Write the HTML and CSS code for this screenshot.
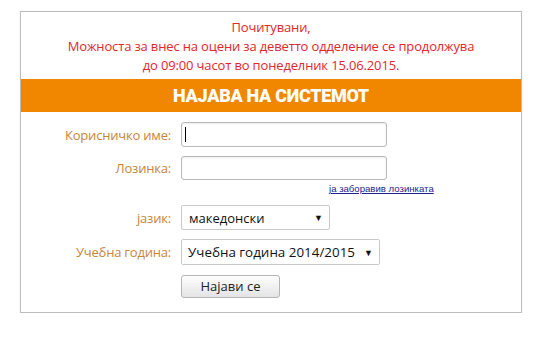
FILE: index.html
```html
<!DOCTYPE html>
<html lang="mk">
<head>
<meta charset="utf-8">
<title>Најава на системот</title>
<link rel="stylesheet" href="styles.css">
</head>
<body>
<div class="box">
  <div class="notice">
    <div>Почитувани,</div>
    <div>Можноста за внес на оцени за деветто одделение се продолжува</div>
    <div>до 09:00 часот во понеделник 15.06.2015.</div>
  </div>
  <div class="title">НАЈАВА НА СИСТЕМОТ</div>
  <form class="form">
    <div class="row r1">
      <label class="lbl">Корисничко име:</label>
      <div class="field input"><span class="caret"></span></div>
    </div>
    <div class="row r2">
      <label class="lbl">Лозинка:</label>
      <div class="field input"></div>
    </div>
    <div class="row linkrow">
      <span class="lbl"></span>
      <a class="forgot" href="#">ја заборавив лозинката</a>
    </div>
    <div class="row r3">
      <label class="lbl">јазик:</label>
      <div class="field select lang"><span>македонски</span><span class="arrow">▼</span></div>
    </div>
    <div class="row r4">
      <label class="lbl">Учебна година:</label>
      <div class="field select year"><span>Учебна година 2014/2015</span><span class="arrow">▼</span></div>
    </div>
    <div class="row r5">
      <span class="lbl"></span>
      <div class="btn">Најави се</div>
    </div>
  </form>
</div>
</body>
</html>
```
FILE: styles.css
```css
html, body {
  margin: 0;
  padding: 0;
  background: #fff;
}
body {
  font-family: "Open Sans", "Noto Sans", sans-serif;
  font-size: 13px;
}
.box {
  margin: 11px 0 0 20px;
  width: 500px;
  height: 300px;
  border: 1px solid #bdbdbd;
  box-shadow: 0 0 3px rgba(0,0,0,0.06);
}
.notice {
  color: #e2262c;
  text-align: center;
  line-height: 19px;
  padding: 6px 0 4px;
  height: 57px;
  letter-spacing: -0.15px;
}
.title {
  background: #f18700;
  color: #fff;
  height: 33px;
  line-height: 33px;
  text-align: center;
  font-family: Roboto, "Liberation Sans", sans-serif;
  font-weight: 900;
  font-size: 18px;
  letter-spacing: -0.3px;
}
.form {
  display: flex;
  flex-direction: column;
  padding-top: 10px;
}
.row {
  display: flex;
  align-items: center;
}
.lbl {
  width: 150px;
  margin-right: 10px;
  text-align: right;
  color: #c6853c;
  letter-spacing: -0.2px;
}
.field {
  box-sizing: border-box;
  background: #fff;
}
.input {
  width: 206px;
  height: 25px;
  border: 1px solid #b9b9b9;
  border-radius: 3px;
  box-shadow: inset 0 1px 2px rgba(0,0,0,0.08);
  display: flex;
  align-items: center;
  padding-left: 3px;
}
.r2 { margin-top: 9px; }
.r2 .input { height: 24px; }
.caret {
  width: 1px;
  height: 15px;
  background: #000;
}
.linkrow {
  margin-top: 2px;
  height: 13px;
}
.forgot {
  margin-left: 148px;
  font-family: "Liberation Sans", Arial, sans-serif;
  font-size: 9.6px;
  color: #23238e;
  text-decoration: underline;
  line-height: 13px;
}
.r3 { margin-top: 10px; }
.r4 { margin-top: 9px; }
.select {
  height: 25px;
  border: 1px solid #c9c9c9;
  border-radius: 2px;
  display: flex;
  align-items: center;
  justify-content: space-between;
  color: #111;
  padding: 0 6px 0 7px;
}
.lang { width: 149px; }
.year { width: 199px; height: 26px; font-size: 13.4px; padding-left: 6px; }
.arrow {
  font-size: 9px;
  color: #111;
}
.r5 { margin-top: 10px; }
.btn {
  box-sizing: border-box;
  width: 99px;
  height: 23px;
  border: 1px solid #b4b4b4;
  border-radius: 3px;
  background: linear-gradient(#fdfdfd, #e4e4e4);
  text-align: center;
  line-height: 21px;
  color: #222;
}
```
